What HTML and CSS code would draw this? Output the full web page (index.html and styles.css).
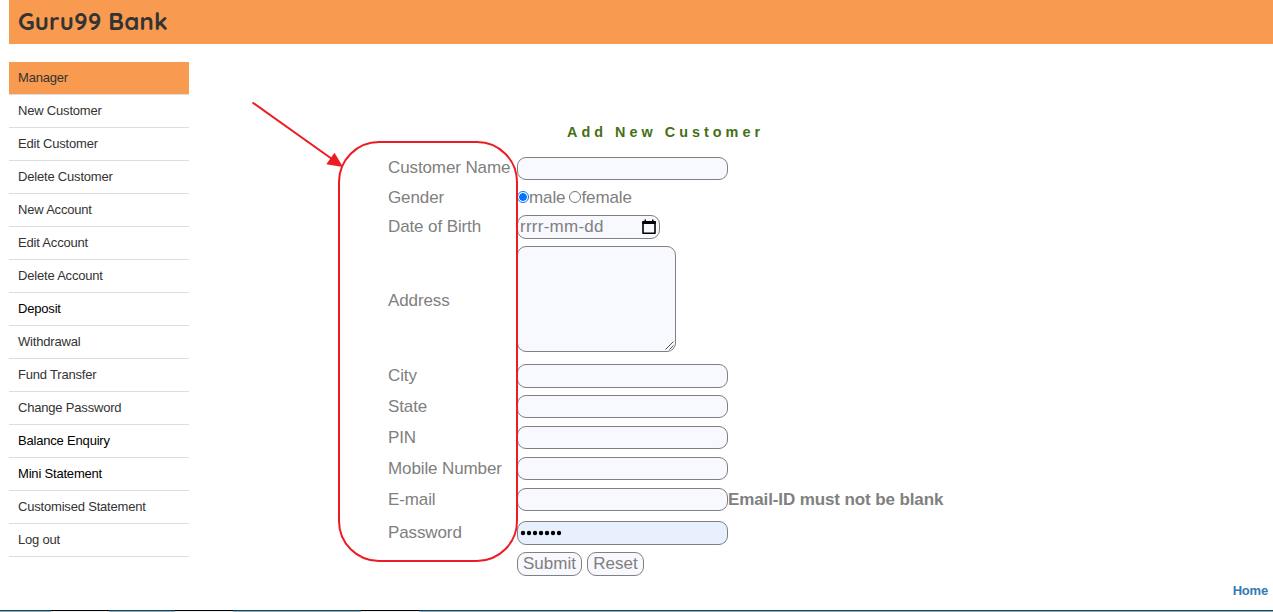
FILE: index.html
```html
<!DOCTYPE html>
<html lang="en">
<head>
<meta charset="utf-8">
<title>Guru99 Bank New Customer Entry Page</title>
<link rel="stylesheet" href="styles.css">
</head>
<body>
<header class="banner"><h1 class="brand">Guru99 Bank</h1></header>
<div class="layout">
  <nav class="menu">
    <a class="menu-item active">Manager</a>
    <a class="menu-item">New Customer</a>
    <a class="menu-item">Edit Customer</a>
    <a class="menu-item">Delete Customer</a>
    <a class="menu-item">New Account</a>
    <a class="menu-item">Edit Account</a>
    <a class="menu-item">Delete Account</a>
    <a class="menu-item strong">Deposit</a>
    <a class="menu-item">Withdrawal</a>
    <a class="menu-item">Fund Transfer</a>
    <a class="menu-item">Change Password</a>
    <a class="menu-item strong">Balance Enquiry</a>
    <a class="menu-item strong">Mini Statement</a>
    <a class="menu-item">Customised Statement</a>
    <a class="menu-item">Log out</a>
  </nav>
  <main class="main">
    <h2 class="heading">Add New Customer</h2>
    <form class="form">
      <div class="row name"><label class="label">Customer Name</label><input class="field" type="text"></div>
      <div class="row gender"><span class="label">Gender</span><span class="radio checked"></span><span class="option first">male</span><span class="radio"></span><span class="option">female</span></div>
      <div class="row dob"><span class="label">Date of Birth</span>
        <div class="field date"><span>rrrr-mm-dd</span>
          <svg class="calendar" width="14" height="16" viewBox="0 0 14 16"><path d="M1 3h12v11.200H1z" fill="none" stroke="#000" stroke-width="1.600" stroke-linejoin="round"/><path d="M.3 2h13.400v3H.3zM2.500 .5h1.500v2h-1.500zM10 .5h1.500v2h-1.500z"/></svg>
        </div></div>
      <div class="row address"><span class="label">Address</span>
        <div class="field area"><svg class="grip" width="9" height="9" viewBox="0 0 9 9"><path d="M.5 8.500l8-8M4.500 8.500l4-4" fill="none" stroke="#555"/></svg></div></div>
      <div class="row city"><label class="label">City</label><input class="field tall" type="text"></div>
      <div class="row"><label class="label">State</label><input class="field" type="text"></div>
      <div class="row"><label class="label">PIN</label><input class="field" type="text"></div>
      <div class="row"><label class="label">Mobile Number</label><input class="field" type="text"></div>
      <div class="row email"><label class="label">E-mail</label><input class="field" type="text"><b class="error">Email-ID must not be blank</b></div>
      <div class="row password"><label class="label">Password</label>
        <div class="field tall filled"><svg width="42" height="6" viewBox="0 0 42 6"><circle cx="3" cy="3" r="2.200"/><circle cx="9" cy="3" r="2.200"/><circle cx="15" cy="3" r="2.200"/><circle cx="21" cy="3" r="2.200"/><circle cx="27" cy="3" r="2.200"/><circle cx="33" cy="3" r="2.200"/><circle cx="39" cy="3" r="2.200"/></svg></div></div>
      <div class="row buttons"><span class="label"></span><button class="button submit" type="button">Submit</button><button class="button reset" type="button">Reset</button></div>
    </form>
    <div class="home"><a>Home</a></div>
  </main>
</div>
<footer class="strip"><i class="tab tab-a"></i><i class="tab tab-b"></i><i class="tab tab-c"></i></footer>
<svg class="annotation" width="1273" height="612" viewBox="0 0 1273 612">
  <rect x="339" y="142" width="178" height="419" rx="40" fill="none" stroke="#ed1c24" stroke-width="2"/>
  <path d="M252.500 102.500L332 159" stroke="#ed1c24" stroke-width="2"/>
  <path d="M343 167L334.500 152.700L326.300 164.300z" fill="#ed1c24"/>
</svg>
</body>
</html>
```
FILE: styles.css
```css
* { box-sizing: border-box; }
html, body { height: 612px; overflow: hidden; }
body { margin: 0; display: flex; flex-direction: column; background: #fff; font-family: "Liberation Sans", Arial, sans-serif; }
.banner { height: 44px; margin-left: 9px; padding-left: 9px; background: #f89b50; }
.brand { margin: 0; color: #333; font: 700 24px/43px Quicksand, Lato, sans-serif; letter-spacing: 0.15px; white-space: nowrap; }
.layout { flex: 1; display: flex; padding: 18px 0 0 9px; }
.menu { width: 180px; flex: none; display: flex; flex-direction: column; }
.menu-item { height: 33px; padding-left: 9px; border-bottom: 1px solid #ddd; color: #333; font-size: 13px; line-height: 31px; letter-spacing: -0.19px; }
.menu-item.active { background: #f89b50; background-clip: padding-box; }
.menu-item.strong { color: #000; }
.main { flex: 1; display: flex; flex-direction: column; padding: 61px 0 0 199px; color: #808080; font-size: 17px; letter-spacing: -0.11px; }
.heading { margin: 0 0 12px 179px; height: 18px; color: #457015; font-size: 14.4px; line-height: 18px; letter-spacing: 4.02px; white-space: nowrap; }
.form { display: flex; flex-direction: column; }
.row { display: flex; align-items: center; height: 31px; line-height: 20px; white-space: nowrap; }
.label { width: 129px; flex: none; }
.name .label { padding-bottom: 2px; }
.field { width: 211px; height: 23px; flex: none; margin: 0; padding: 0 2px; border: 1px solid #808080; border-radius: 9px; background: #f8f8ff; outline: 0; }
.field.tall { height: 24px; }
.gender { height: 27px; }
.radio { width: 12px; height: 12px; margin-bottom: 1px; border: 1px solid #767676; border-radius: 50%; background: #fff; }
.radio.checked { border-color: #0075ff; background: radial-gradient(circle, #0075ff 3.5px, #fff 4.2px); }
.option.first { margin-right: 4px; }
.dob { height: 32px; }
.date { width: 143px; height: 24px; display: flex; align-items: center; justify-content: space-between; letter-spacing: 0.25px; }
.calendar { margin-right: 1px; }
.address { height: 112px; }
.address .label { padding-top: 3px; }
.area { width: 159px; height: 106px; display: flex; align-items: flex-end; justify-content: flex-end; padding: 0 1px 1px 0; }
.city { height: 36px; padding-top: 6px; }
.email .label { padding-top: 1px; }
.password { height: 36px; }
.password .label { padding-bottom: 1px; }
.filled { display: flex; align-items: center; padding-bottom: 1px; background: #e8f0fe; }
.buttons { height: 26px; }
.button { height: 24px; padding: 0; border: 1px solid #808080; border-radius: 9px; background: #f8f8ff; color: #808080; font: 17px/20px "Liberation Sans", Arial, sans-serif; }
.submit { width: 65px; margin-right: 5px; }
.reset { width: 57px; }
.home { padding: 6px 5px 0 0; text-align: right; color: #337ab7; font-size: 13px; font-weight: 700; line-height: 16px; letter-spacing: -0.2px; }
.strip { height: 2px; flex: none; display: flex; border-top: 1px solid #283c4c; background: #78b4d2; }
.tab { width: 58px; height: 2px; margin-top: -1px; border-top: 1px solid #000; background: #eef2f6; }
.tab-a { margin-left: 51px; }
.tab-b { margin-left: 66px; }
.tab-c { margin-left: 128px; }
.annotation { position: absolute; top: 0; left: 0; pointer-events: none; }
```
